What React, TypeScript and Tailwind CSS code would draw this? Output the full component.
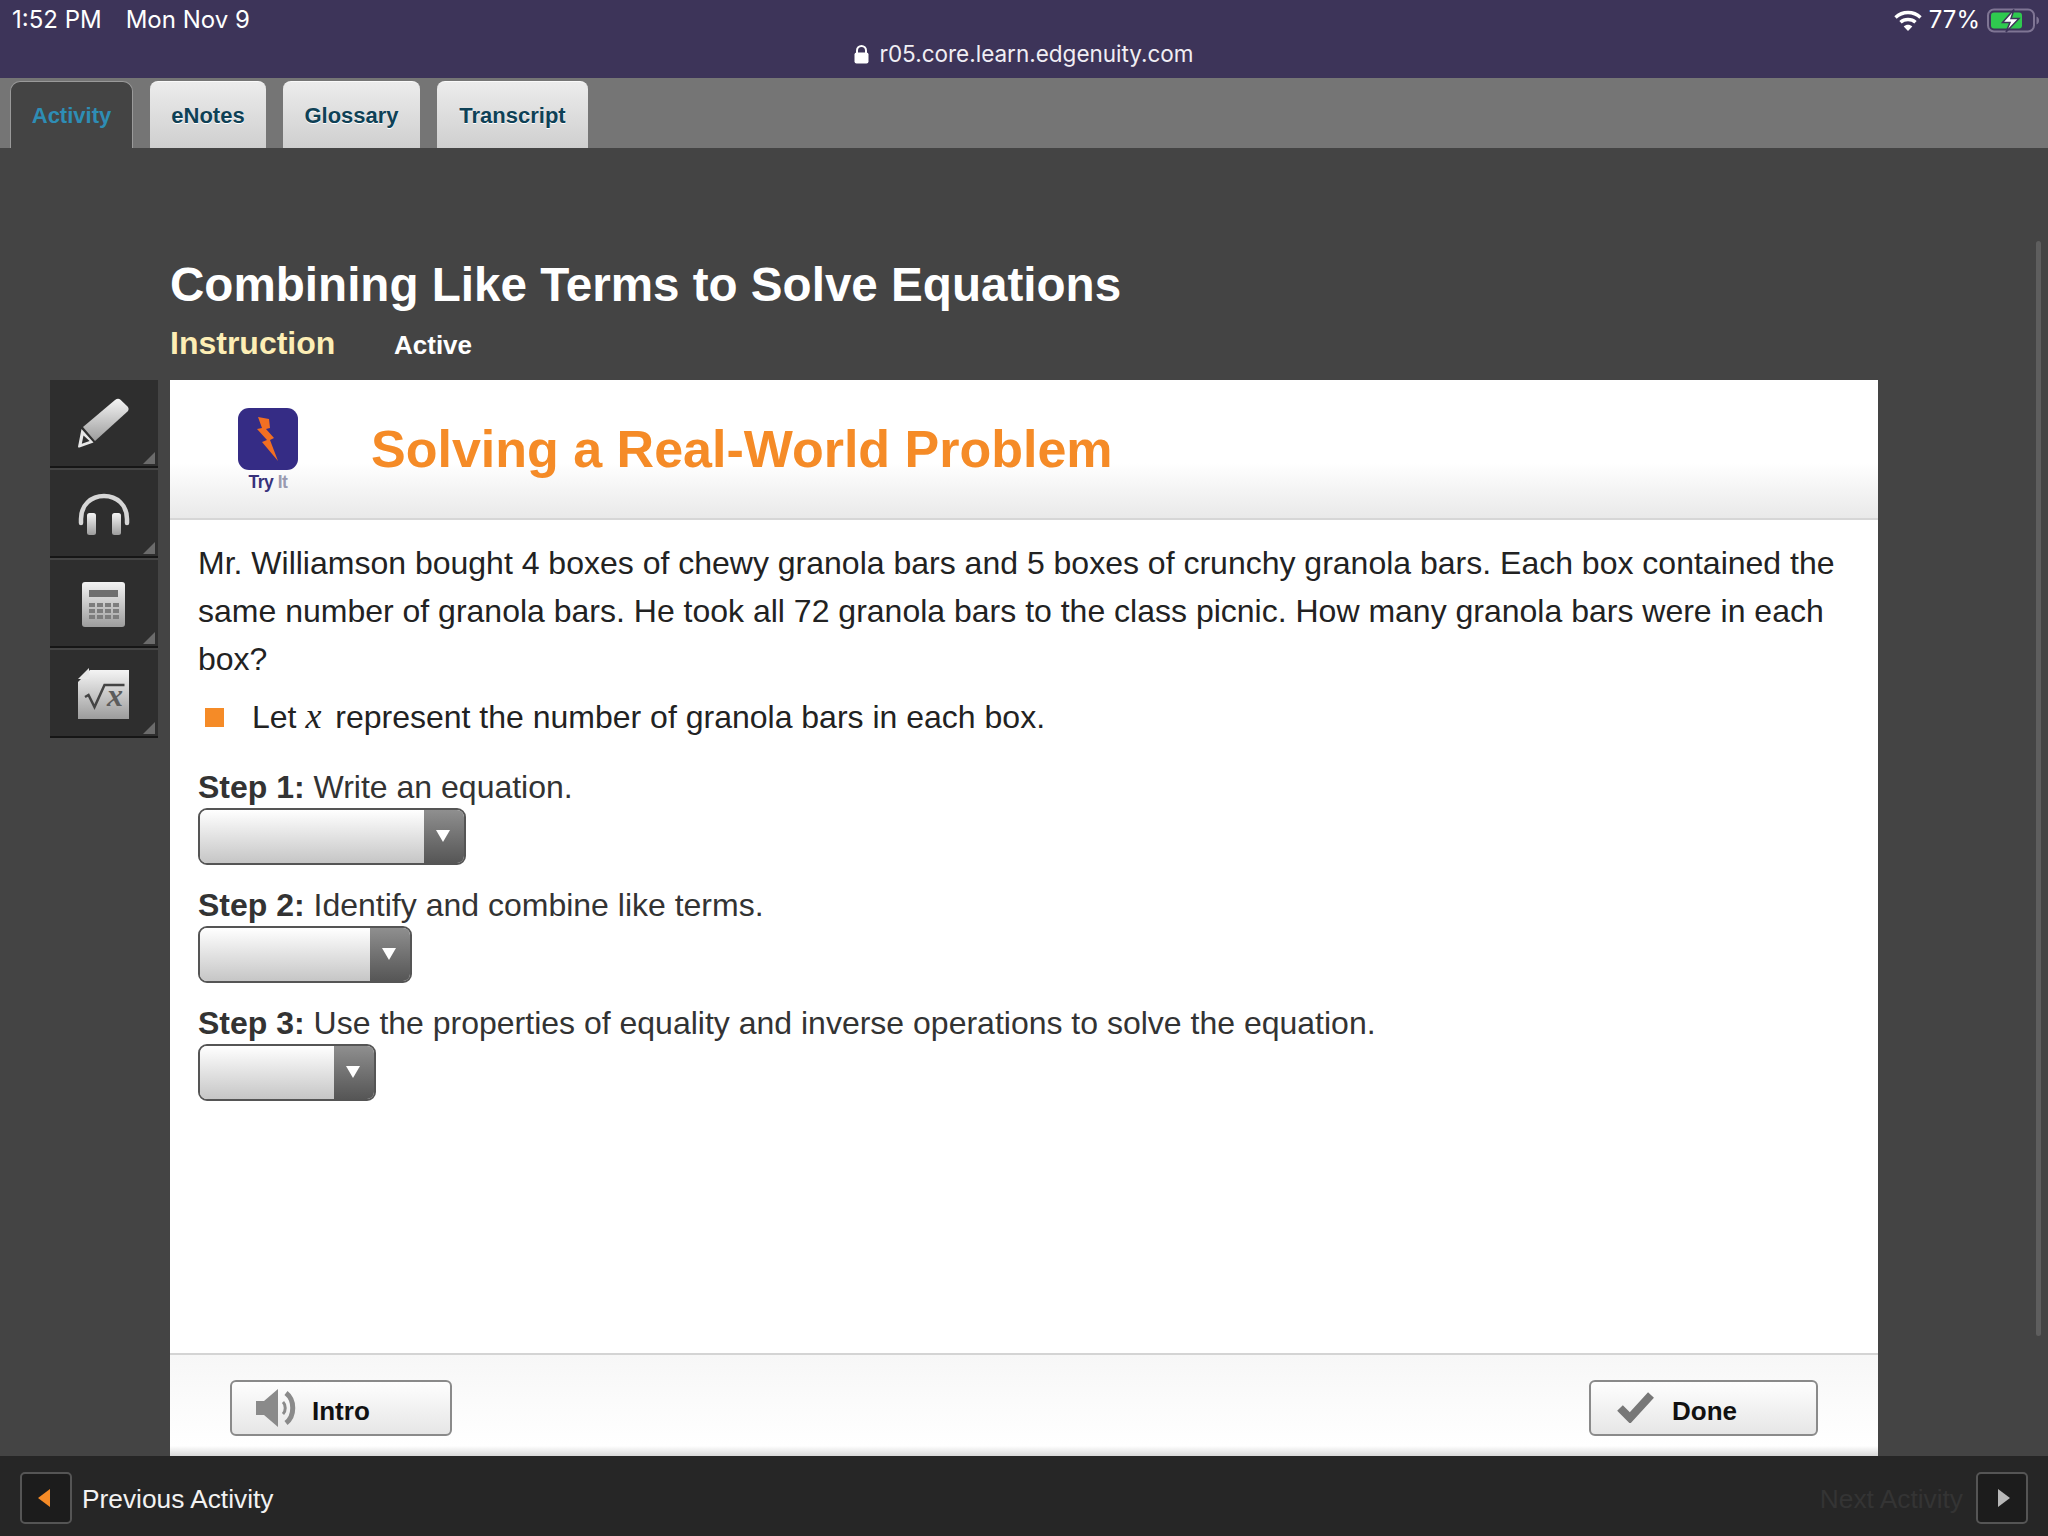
import React from "react";

const SANS = "[font-family:'Liberation_Sans',Arial,sans-serif]";

function Wifi() {
  return (
    <svg width="28" height="21" viewBox="0 0 28 21" fill="none" stroke="#fff" strokeLinecap="butt">
      <path d="M1.5 7.5C8.5 .8 19.500 .8 26.500 7.500" strokeWidth="3.400" />
      <path d="M6.500 12.300C10.500 8.500 17.500 8.500 21.500 12.300" strokeWidth="3.400" />
      <path d="M14 21l-4.300-4.600c2.500-2.100 6.100-2.100 8.600 0z" fill="#fff" stroke="none" />
    </svg>
  );
}

function Battery() {
  return (
    <svg width="54" height="25" viewBox="0 0 54 25">
      <rect x="1" y="1.500" width="46" height="22" rx="6" fill="none" stroke="#7f7594" strokeWidth="2" />
      <rect x="4" y="4.500" width="31" height="16" rx="3" fill="#2fc94f" />
      <path d="M49.500 8.500c2 .8 2.500 2.300 2.500 4s-.5 3.200-2.500 4z" fill="#7f7594" />
      <path d="M27 1.500L15.500 14.500h7.500L19 24 32 10.500h-8z" fill="#fff" stroke="#3d3459" strokeWidth="1.500" />
    </svg>
  );
}

function Defs() {
  return (
    <svg width="0" height="0" className="absolute">
      <defs>
        <linearGradient id="toolgrad" x1="0" y1="0" x2="0" y2="1">
          <stop offset="0" stopColor="#f4f4f4" />
          <stop offset="1" stopColor="#9c9c9c" />
        </linearGradient>
      </defs>
    </svg>
  );
}

function Pencil() {
  return (
    <svg width="52" height="50" viewBox="0 0 52 50">
      <path d="M37 2c2-1.500 4-1.500 5.500-.2l7 6.700c1.500 1.700 1.500 3.300 0 5L17 43 5 29z" fill="url(#toolgrad)" />
      <path d="M3.500 31L15.500 44.500 1.500 49.500c-1 .3-1.700-.3-1.400-1.300zM5.500 37.500L3.800 45.800l7.800-2.800z" fill="#e6e6e6" fillRule="evenodd" />
    </svg>
  );
}

function Headphones() {
  return (
    <svg width="52" height="42" viewBox="0 0 52 42" fill="none">
      <path d="M3 30V26C3 12 13 3 26 3s23 9 23 23v4" stroke="#d6d6d6" strokeWidth="4.500" strokeLinecap="round" />
      <rect x="9" y="20" width="9" height="22" rx="2.500" fill="url(#toolgrad)" />
      <rect x="34" y="20" width="9" height="22" rx="2.500" fill="url(#toolgrad)" />
    </svg>
  );
}

function Calculator() {
  const cols = [7, 15, 23, 31];
  const rows = [21, 27, 33];
  return (
    <svg width="43" height="46" viewBox="0 0 43 46" className="mr-[2px]">
      <rect x="0" y="0" width="43" height="45" rx="3" fill="url(#toolgrad)" />
      <rect x="7" y="8" width="29" height="7" fill="#6f6f6f" />
      {rows.map((r) => cols.map((c) => <rect key={r + "-" + c} x={c} y={r} width="6" height="4" fill="#7d7d7d" />))}
    </svg>
  );
}

function SqrtDoc() {
  return (
    <svg width="52" height="52" viewBox="0 0 52 52">
      <path d="M12 2H51V51H0V14z" fill="url(#toolgrad)" />
      <path d="M11 0v11H0z" fill="#e8e8e8" />
      <path d="M7 29l3.500-2 6 12 10-22h20" fill="none" stroke="#444" strokeWidth="2.500" />
      <text x="29" y="38" fontSize="32" fontStyle="italic" fontWeight="700" fontFamily="'Liberation Serif', serif" fill="#5c5c5c">x</text>
    </svg>
  );
}

function ToolButton({ children, top }: { children: React.ReactNode; top: string }) {
  return (
    <div className={`relative h-[88px] mb-[2px] w-[108px] bg-[#2e2e2e] border-b-2 border-b-[#161616] flex justify-center ${top}`}>
      {children}
      <div className="absolute right-[3px] bottom-[2px] h-0 w-0 border-l-[12px] border-l-transparent border-b-[12px] border-b-[#6b6b6b]" />
    </div>
  );
}

function Logo() {
  return (
    <div className="w-[62px] flex flex-col items-center">
      <svg width="60" height="62" viewBox="0 0 60 62">
        <rect x="0" y="0" width="60" height="62" rx="11" fill="#352c85" />
        <path d="M20 9l11 2 1 9-4 1 8 9-4 2 8 21-16-19 5-2-10-11 5-1z" fill="#f26f22" />
      </svg>
      <div className="mt-[3px] text-[17.500px] leading-[18px] font-bold tracking-[-0.5px] text-[#38327c]">
        Try <span className="text-[#9a9ab0]">It</span>
      </div>
    </div>
  );
}

function Select({ outer, inner }: { outer: string; inner: string }) {
  return (
    <div className={`flex h-[57px] rounded-[9px] border-[2px] border-[#555] overflow-hidden ${outer}`}>
      <div className={`bg-gradient-to-b from-[#ffffff] to-[#c6c6c6] ${inner}`} />
      <div className="flex-1 flex items-center justify-center bg-gradient-to-b from-[#8f8f8f] to-[#565656]">
        <div className="mb-[2px] mr-[2px] h-0 w-0 border-l-[7px] border-r-[7px] border-t-[12px] border-l-transparent border-r-transparent border-t-white" />
      </div>
    </div>
  );
}

function Step({ n, text, outer, inner }: { n: number; text: string; outer: string; inner: string }) {
  return (
    <div className="mb-[20px]">
      <div className="h-[41px] leading-[40px] text-[#333]">
        <b>Step {n}:</b> {text}
      </div>
      <Select outer={outer} inner={inner} />
    </div>
  );
}

function ActionButton({ icon, label, cls }: { icon: React.ReactNode; label: string; cls: string }) {
  return (
    <div className={`h-[56px] rounded-[6px] border-[2px] border-[#8a8a8a] bg-gradient-to-b from-[#fefefe] to-[#e6e6e6] flex items-center ${cls}`}>
      {icon}
      <span className="text-[26px] font-bold text-[#111] mt-[6px]">{label}</span>
    </div>
  );
}

const GREY_TAB = "h-[67px] rounded-t-[8px] border-t border-t-[#fafafa] bg-gradient-to-b from-[#ececec] to-[#cfcfcf] flex items-center justify-center text-[#0e4156] [text-shadow:0_1px_0_#fff]";

export default function App() {
  return (
    <div className={`relative w-[2048px] h-[1536px] overflow-hidden flex flex-col bg-[#444444] ${SANS}`}>
      <Defs />
      {/* status bar */}
      <div className="relative h-[78px] shrink-0 bg-[#3d3459] text-white font-['Inter',sans-serif]">
        <div className="flex items-start justify-between pl-[12px] pr-[7px] pt-[5px]">
          <div className="flex gap-[24px] text-[24px] leading-[30px]">
            <span>1:52 PM</span>
            <span>Mon Nov 9</span>
          </div>
          <div className="flex items-center gap-[7px] text-[24px] leading-[30px]">
            <Wifi />
            <span>77%</span>
            <Battery />
          </div>
        </div>
        <div className="mt-[4px] flex items-center justify-center gap-[10px] text-[22.500px] leading-[30px] text-[#f0eef4]">
          <svg width="15" height="19" viewBox="0 0 15 19" fill="#fff">
            <path d="M2 8V5.500a5.500 5.500 0 0 1 11 0V8h-2V5.500a3.500 3.500 0 0 0-7 0V8z" />
            <rect x="0.500" y="7.500" width="14" height="11" rx="2" />
          </svg>
          <span>r05.core.learn.edgenuity.com</span>
        </div>
      </div>

      {/* tabs */}
      <div className="h-[70px] shrink-0 bg-[#757575] flex items-end pl-[10px] gap-[17px] text-[22px] font-bold">
        <div className="w-[123px] h-[67px] rounded-t-[10px] bg-[#444444] border border-b-0 border-[#9a9a9a] flex items-center justify-center text-[#2e8db5]">
          Activity
        </div>
        <div className={`w-[116px] ${GREY_TAB}`}>eNotes</div>
        <div className={`w-[137px] ${GREY_TAB}`}>Glossary</div>
        <div className={`w-[151px] ${GREY_TAB}`}>Transcript</div>
      </div>

      {/* main */}
      <div className="flex-1 min-h-0 flex flex-col">
        <div className="pl-[170px] pt-[107px] h-[232px]">
          <h1 className="text-[47.600px] leading-[60px] font-bold text-white">Combining Like Terms to Solve Equations</h1>
          <div className="flex items-baseline">
            <span className="w-[224px] text-[32px] leading-[56px] font-bold text-[#fdeeb5]">Instruction</span>
            <span className="text-[26px] font-bold text-white">Active</span>
          </div>
        </div>
        <div className="flex flex-1 min-h-0 pl-[50px]">
          <div className="w-[108px] mr-[12px] flex flex-col">
            <ToolButton top="pt-[18px]"><Pencil /></ToolButton>
            <ToolButton top="pt-[23px]"><Headphones /></ToolButton>
            <ToolButton top="pt-[22px]"><Calculator /></ToolButton>
            <ToolButton top="pt-[18px]"><SqrtDoc /></ToolButton>
          </div>
          <div className="w-[1708px] bg-white flex flex-col">
            <div className="h-[140px] shrink-0 flex items-center pl-[67px] bg-gradient-to-b from-white from-60% to-[#e9e9e9] border-b-2 border-b-[#d6d6d6]">
              <Logo />
              <h2 className="ml-[72px] text-[52px] font-bold text-[#f58b27]">Solving a Real-World Problem</h2>
            </div>
            <div className="flex-1 px-[28px] pt-[19px] text-[32px] leading-[48px] text-[#222]">
              <p>
                Mr. Williamson bought 4 boxes of chewy granola bars and 5 boxes of crunchy granola bars. Each box contained the same number of granola bars. He took all 72 granola bars to the class picnic. How many granola bars were in each box?
              </p>
              <div className="flex items-center mt-[10px] mb-[26px] h-[48px]">
                <div className="ml-[7px] mr-[28px] h-[19px] w-[19px] bg-[#f58b27]" />
                <span>
                  Let <i className="pr-[5px] text-[36px] leading-none [font-family:'Liberation_Serif',serif]">x</i> represent the number of granola bars in each box.
                </span>
              </div>
              <Step n={1} text="Write an equation." outer="w-[268px]" inner="w-[224px]" />
              <Step n={2} text="Identify and combine like terms." outer="w-[214px]" inner="w-[170px]" />
              <Step n={3} text="Use the properties of equality and inverse operations to solve the equation." outer="w-[178px]" inner="w-[134px]" />
            </div>
            <div className="h-[103px] shrink-0 border-t-2 border-t-[#d4d4d4] bg-gradient-to-b from-[#f7f7f7] via-white via-90% to-[#d8d8d8] flex justify-between pt-[25px] pl-[60px] pr-[60px]">
              <ActionButton
                cls="w-[222px] pl-[24px]"
                label="Intro"
                icon={
                  <svg width="42" height="42" viewBox="0 0 42 42" className="mr-[14px]" fill="none">
                    <path d="M0 14h8L22 2v38L8 28H0z" fill="#8a8a8a" />
                    <path d="M27 15c3 3 3 9 0 12" stroke="#8a8a8a" strokeWidth="3" />
                    <path d="M30 6c9 7 9 23 0 30" stroke="#8a8a8a" strokeWidth="5" />
                  </svg>
                }
              />
              <ActionButton
                cls="w-[229px] pl-[26px]"
                label="Done"
                icon={
                  <svg width="38" height="32" viewBox="0 0 38 32" className="mr-[17px] -mt-[2px]" fill="none">
                    <path d="M3 17l10 10L34 4" stroke="#777" strokeWidth="8" />
                  </svg>
                }
              />
            </div>
          </div>
        </div>
      </div>

      {/* footer */}
      <div className="h-[80px] shrink-0 bg-[#262626] flex items-center justify-between px-[20px] pt-[3px] text-[26.300px]">
        <div className="flex items-center gap-[10px] text-[#f2f2f2]">
          <div className="h-[52px] w-[52px] rounded-[5px] border-[2px] border-[#555] bg-[#1c1c1c] flex items-center justify-center">
            <div className="mr-[4px] h-0 w-0 border-t-[9px] border-b-[9px] border-r-[12px] border-t-transparent border-b-transparent border-r-[#f58b27]" />
          </div>
          <span className="mt-[4px]">Previous Activity</span>
        </div>
        <div className="flex items-center gap-[13px] text-[#343434]">
          <span className="mt-[4px]">Next Activity</span>
          <div className="h-[52px] w-[52px] rounded-[5px] border-[2px] border-[#555] bg-[#1c1c1c] flex items-center justify-center">
            <div className="ml-[4px] h-0 w-0 border-t-[9px] border-b-[9px] border-l-[12px] border-t-transparent border-b-transparent border-l-[#b8b8b8]" />
          </div>
        </div>
      </div>

      {/* scrollbar overlay */}
      <div className="absolute left-[2036px] top-[241px] h-[1095px] w-[5px] rounded-full bg-[#5e5e5e]" />
    </div>
  );
}
